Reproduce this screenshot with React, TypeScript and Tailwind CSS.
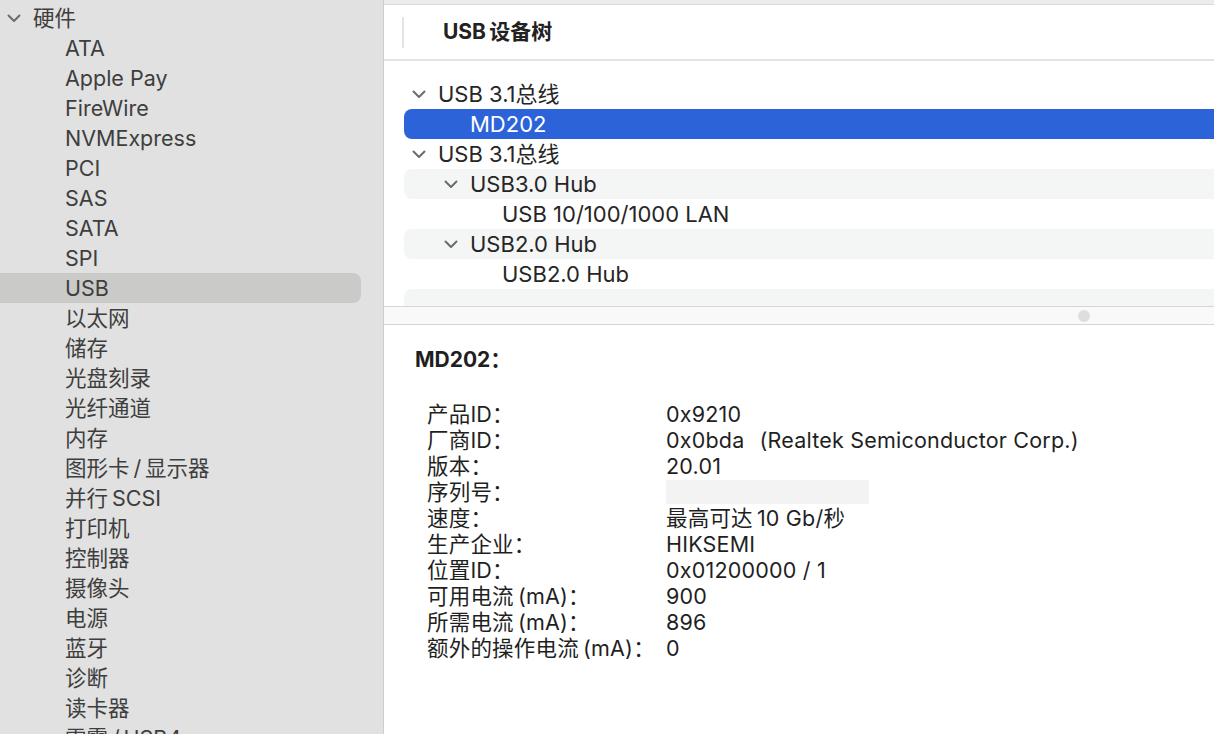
import React from "react"

const SIDEBAR = [
  "ATA", "Apple Pay", "FireWire", "NVMExpress", "PCI", "SAS", "SATA", "SPI", "USB",
  "以太网", "储存", "光盘刻录", "光纤通道", "内存", "图形卡\u2009/\u2009显示器", "并行\u2009SCSI",
  "打印机", "控制器", "摄像头", "电源", "蓝牙", "诊断", "读卡器", "雷雳\u2009/\u2009USB4",
]

const TREE = [
  { label: "USB 3.1总线", level: 0, open: true },
  { label: "MD202", level: 1, selected: true },
  { label: "USB 3.1总线", level: 0, open: true },
  { label: "USB3.0 Hub", level: 1, open: true },
  { label: "USB 10/100/1000 LAN", level: 2 },
  { label: "USB2.0 Hub", level: 1, open: true },
  { label: "USB2.0 Hub", level: 2 },
  { label: "", level: 0 },
]

const DETAILS: [string, string | null][] = [
  ["产品ID：", "0x9210"],
  ["厂商ID：", "0x0bda\u2002\u2009(Realtek Semiconductor Corp.)"],
  ["版本：", "20.01"],
  ["序列号：", null],
  ["速度：", "最高可达\u200910 Gb/秒"],
  ["生产企业：", "HIKSEMI"],
  ["位置ID：", "0x01200000 / 1"],
  ["可用电流\u2009(mA)：", "900"],
  ["所需电流\u2009(mA)：", "896"],
  ["额外的操作电流\u2009(mA)：", "0"],
]

function Chevron({ className = "" }: { className?: string }) {
  return (
    <svg className={className} width="14" height="10" viewBox="0 0 14 10" fill="none" stroke="#6c6c6c" strokeWidth={2} strokeLinecap="round" strokeLinejoin="round">
      <path d="M1.5 2.5 7 8l5.5-5.5" />
    </svg>
  )
}

export default function App() {
  return (
    <div className="flex h-[734px] w-[1214px] overflow-hidden bg-white font-[Inter,'Noto_Sans_CJK_SC',sans-serif]">
      {/* sidebar */}
      <aside className="w-[384px] shrink-0 bg-[#e1e1e1] border-r border-[#cdcdcd] pt-[3px] text-[21.5px] text-[#3e3e3e]">
        <div className="flex h-[30px] items-center">
          <Chevron className="ml-[7px] mr-[12px]" />
          <span>硬件</span>
        </div>
        {SIDEBAR.map(item => (
          <div
            key={item}
            className={`flex h-[30px] items-center pl-[65px] mr-[22px] rounded-r-lg ${item === "USB" ? "bg-[#cacac8]" : ""}`}
          >
            {item}
          </div>
        ))}
      </aside>

      {/* main */}
      <main className="flex min-w-0 flex-1 flex-col">
        <div className="h-[4px] bg-[#ececec] border-b border-[#dadada] box-content" />
        <div className="flex h-[56px] items-center border-b-2 border-[#e3e3e3]">
          <div className="ml-[18px] h-[31px] w-[2px] bg-[#e4e4e4]" />
          <h2 className="ml-[39px] text-[21px] font-bold text-[#222]">USB&#x2009;设备树</h2>
        </div>

        <div className="h-[245px] overflow-hidden pl-[20px] pt-[18px] text-[22px] text-[#262626]">
          {TREE.map((row, i) => (
            <div
              key={i}
              className={`flex h-[30px] items-center rounded-l-lg ${
                row.selected ? "bg-[#2c63d8] text-white" : i % 2 === 1 ? "bg-[#f4f5f5]" : ""
              }`}
              style={{ paddingLeft: 8 + row.level * 32 }}
            >
              {row.open ? <Chevron className="mr-[12px]" /> : <span className="w-[26px]" />}
              <span>{row.label}</span>
            </div>
          ))}
        </div>

        <div className="relative h-[17px] border-y border-[#d6d6d6] bg-[#f9f9f9] box-content">
          <div className="absolute left-[694px] top-[3px] size-[12px] rounded-full bg-[#dedede]" />
        </div>

        <section className="flex-1 pl-[31px] pt-[22px] text-[#1f1f1f]">
          <h3 className="text-[21px] font-bold leading-[26px]">MD202：</h3>
          <div className="mt-[28px] ml-[12px] grid grid-cols-[239px_1fr] text-[21.5px] leading-[26px] tracking-[0.2px]">
            {DETAILS.map(([k, v]) => (
              <React.Fragment key={k}>
                <div>{k}</div>
                <div className="flex items-center whitespace-pre">
                  {v ?? <span className="block h-[24px] w-[203px] bg-[#f3f3f3]" />}
                </div>
              </React.Fragment>
            ))}
          </div>
        </section>
      </main>
    </div>
  )
}
